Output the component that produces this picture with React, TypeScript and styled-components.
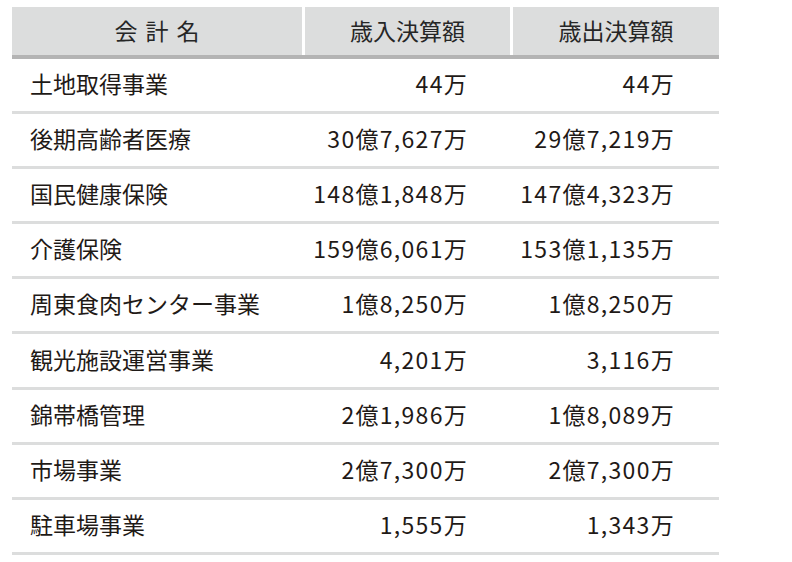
import React from "react";
import styled, { createGlobalStyle } from "styled-components";

const Global = createGlobalStyle`
  html, body { margin: 0; padding: 0; background: #ffffff; }
  body { font-family: "Noto Sans CJK JP", "Noto Sans", sans-serif; }
`;

const Page = styled.div`
  padding: 7px 0 0 12px;
`;

const Table = styled.div`
  width: 707px;
`;

const HeaderRow = styled.div`
  display: grid;
  grid-template-columns: 290px 205px 206px;
  column-gap: 3px;
  border-bottom: 4px solid #b4b4b4;
`;

const HeadCell = styled.div<{ $spaced?: boolean }>`
  height: 48px;
  box-sizing: border-box;
  padding-bottom: 3px;
  background: #dcdddd;
  display: flex;
  align-items: center;
  justify-content: center;
  font-size: 23px;
  color: #262626;
  letter-spacing: ${(p) => (p.$spaced ? "0.35em" : "0")};
  padding-left: ${(p) => (p.$spaced ? "0.35em" : "0")};
`;

const Row = styled.div`
  display: grid;
  grid-template-columns: 293px 208px 206px;
  height: 52.1px;
  box-sizing: content-box;
  border-bottom: 3px solid #dcdddd;
  align-items: center;
  font-size: 23px;
  color: #1f1a17;
`;

const NameCell = styled.div`
  padding-left: 18px;
  padding-bottom: 4px;
`;

const NumCell = styled.div<{ $pr: number }>`
  text-align: right;
  letter-spacing: 1.3px;
  padding-bottom: 4px;
  padding-right: ${(p) => p.$pr}px;
`;

const rows: [string, string, string][] = [
  ["土地取得事業", "44万", "44万"],
  ["後期高齢者医療", "30億7,627万", "29億7,219万"],
  ["国民健康保険", "148億1,848万", "147億4,323万"],
  ["介護保険", "159億6,061万", "153億1,135万"],
  ["周東食肉センター事業", "1億8,250万", "1億8,250万"],
  ["観光施設運営事業", "4,201万", "3,116万"],
  ["錦帯橋管理", "2億1,986万", "1億8,089万"],
  ["市場事業", "2億7,300万", "2億7,300万"],
  ["駐車場事業", "1,555万", "1,343万"],
];

export default function App() {
  return (
    <Page>
      <Global />
      <Table>
        <HeaderRow>
          <HeadCell $spaced>会計名</HeadCell>
          <HeadCell>歳入決算額</HeadCell>
          <HeadCell>歳出決算額</HeadCell>
        </HeaderRow>
        {rows.map(([name, inc, out]) => (
          <Row key={name}>
            <NameCell>{name}</NameCell>
            <NumCell $pr={45}>{inc}</NumCell>
            <NumCell $pr={44}>{out}</NumCell>
          </Row>
        ))}
      </Table>
    </Page>
  );
}
